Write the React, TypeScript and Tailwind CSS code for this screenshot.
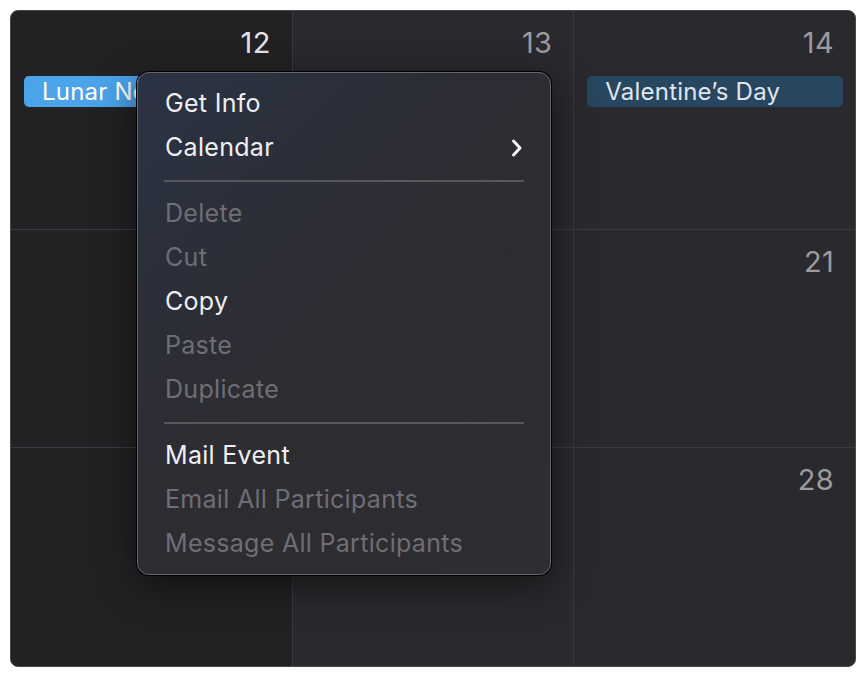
import React from 'react'

type Item = { label: string; enabled?: boolean; submenu?: boolean } | 'sep'

const menu: Item[] = [
  { label: 'Get Info', enabled: true },
  { label: 'Calendar', enabled: true, submenu: true },
  'sep',
  { label: 'Delete' },
  { label: 'Cut' },
  { label: 'Copy', enabled: true },
  { label: 'Paste' },
  { label: 'Duplicate' },
  'sep',
  { label: 'Mail Event', enabled: true },
  { label: 'Email All Participants' },
  { label: 'Message All Participants' },
]

function DayCell({
  day,
  dark,
  today,
  children,
}: {
  day: string
  dark?: boolean
  today?: boolean
  children?: React.ReactNode
}) {
  return (
    <div className={`flex flex-col ${dark ? 'bg-[#222124]' : 'bg-[#2a292d]'}`}>
      <div
        className={`pt-[13px] pr-[21px] text-right text-[29px] leading-[38px] tracking-[0.3px] ${
          today ? 'text-[#e6e6e8]' : 'text-[#9c9b9f]'
        }`}
      >
        {day}
      </div>
      {children}
    </div>
  )
}

function EventPill({ label, color }: { label: string; color: 'blue' | 'navy' }) {
  return (
    <div
      className={`mt-[14px] ml-[13px] mr-[12px] h-[31px] rounded-[5px] pl-[18px] text-[24px] leading-[31px] tracking-[0.2px] whitespace-nowrap overflow-hidden ${
        color === 'blue' ? 'bg-[#4ba3ea] text-white' : 'bg-[#27465f] text-[#e0e6ed]'
      }`}
    >
      {label}
    </div>
  )
}

function Chevron() {
  return (
    <svg width="12" height="20" viewBox="0 0 12 20" fill="none">
      <polyline
        points="2.5,3 9,10 2.5,17"
        stroke="#f4f4f5"
        strokeWidth="3"
        strokeLinecap="round"
        strokeLinejoin="round"
      />
    </svg>
  )
}

function ContextMenu() {
  return (
    <div className="absolute left-[126px] top-[61px] w-[414px] rounded-[12px] border border-[#66656b] ring-1 ring-black bg-[linear-gradient(135deg,#2a3345_0%,#2c2d35_35%,#2d2c31_60%,#2e2d32_100%)] pt-[9px] pb-[8px] shadow-[0_10px_40px_rgba(0,0,0,0.55)]">
      {menu.map((item, i) =>
        item === 'sep' ? (
          <div key={i} className="h-[22px] flex items-center px-[26px]">
            <div className="h-[2px] w-full bg-[#57565b]" />
          </div>
        ) : (
          <div
            key={i}
            className={`h-[44px] flex items-center justify-between pl-[27px] pr-[27px] text-[25px] tracking-[0.3px] ${
              item.enabled ? 'text-[#efeff1]' : 'text-[#6f6e74]'
            }`}
          >
            <span>{item.label}</span>
            {item.submenu && <Chevron />}
          </div>
        ),
      )}
    </div>
  )
}

export default function App() {
  return (
    <div
      className="w-[866px] h-[678px] bg-white p-[10px]"
      style={{ fontFamily: 'Inter, "Noto Sans", "Liberation Sans", sans-serif' }}
    >
      <div className="relative h-[657px] w-[846px] rounded-[8px] border border-[#47464b] bg-[#3b3a3f]">
        <div className="grid h-full grid-cols-3 grid-rows-3 gap-px overflow-hidden rounded-[7px]">
          <DayCell day="12" dark today>
            <EventPill label="Lunar New Year" color="blue" />
          </DayCell>
          <DayCell day="13" />
          <DayCell day="14">
            <EventPill label="Valentine’s Day" color="navy" />
          </DayCell>
          <DayCell day="" dark />
          <DayCell day="" />
          <DayCell day="21" />
          <DayCell day="" dark />
          <DayCell day="" />
          <DayCell day="28" />
        </div>
        <ContextMenu />
      </div>
    </div>
  )
}
